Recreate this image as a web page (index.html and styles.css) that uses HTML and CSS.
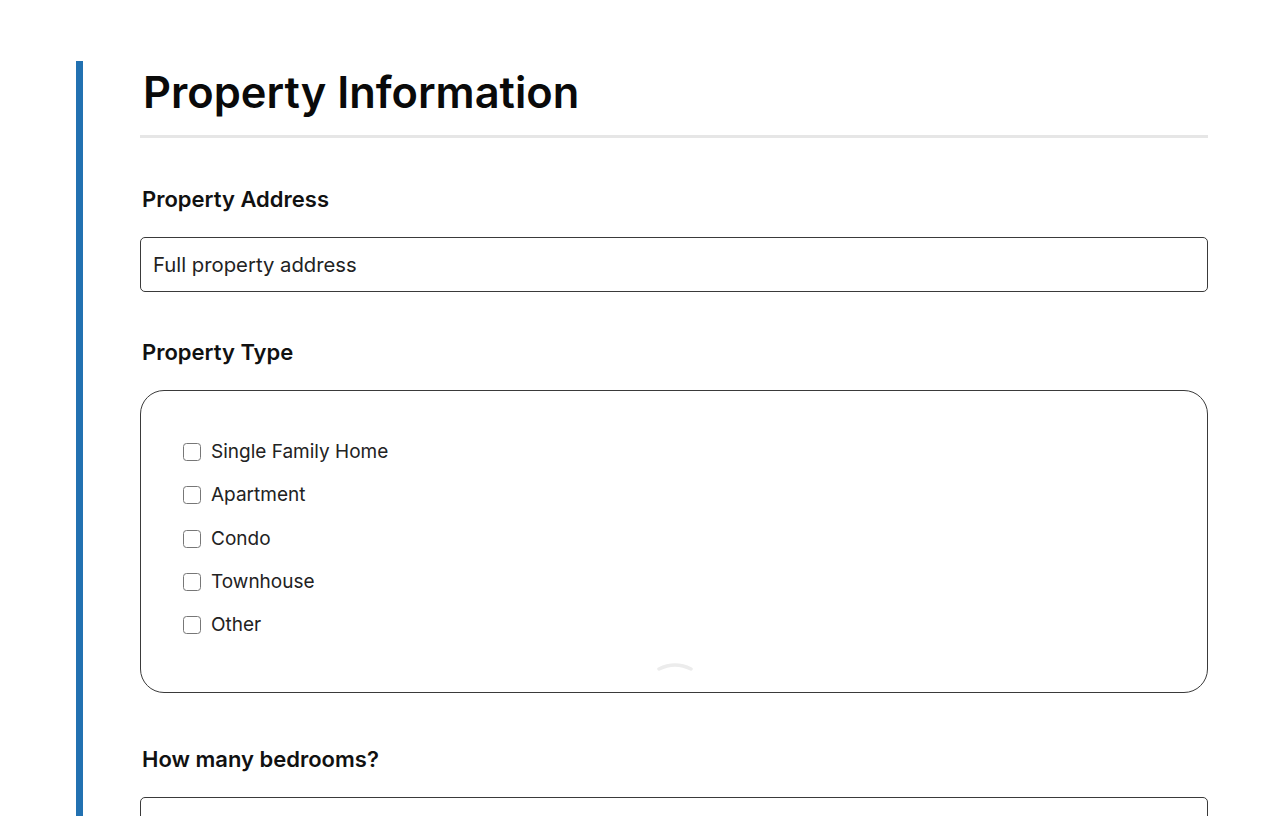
FILE: index.html
```html
<!DOCTYPE html>
<html>
<head>
<meta charset="utf-8">
<link rel="stylesheet" href="styles.css">
</head>
<body>
<section class="form-section">
  <h1 class="section-title">Property Information</h1>
  <div class="field">
    <label class="field-label">Property Address</label>
    <div class="text-input">Full property address</div>
  </div>
  <div class="field">
    <label class="field-label">Property Type</label>
    <div class="choice-box">
      <ul class="choices">
        <li class="choice"><span class="box"></span>Single Family Home</li>
        <li class="choice"><span class="box"></span>Apartment</li>
        <li class="choice"><span class="box"></span>Condo</li>
        <li class="choice"><span class="box"></span>Townhouse</li>
        <li class="choice"><span class="box"></span>Other</li>
      </ul>
      <svg class="arc" width="36" height="10" viewBox="0 0 36 10"><path d="M2 8 Q18 0 34 8" fill="none" stroke="#ececec" stroke-width="3.5" stroke-linecap="round"/></svg>
    </div>
  </div>
  <div class="field field-last">
    <label class="field-label">How many bedrooms?</label>
    <div class="text-input"></div>
  </div>
</section>
</body>
</html>
```
FILE: styles.css
```css
html, body {
  margin: 0;
  padding: 0;
  background: #ffffff;
}
body {
  font-family: Inter, "Noto Sans", sans-serif;
  color: #111;
  overflow: hidden;
  height: 816px;
}
.form-section {
  margin: 61px 0 0 76px;
  width: 1068px;
  border-left: 7px solid #2271b1;
  padding-left: 57px;
  padding-top: 4px;
}
.section-title {
  margin: 0;
  font-size: 43.4px;
  font-weight: 600;
  line-height: 54px;
  color: #0a0a0a;
  padding-left: 3px;
  padding-bottom: 16px;
  border-bottom: 3px solid #e6e6e6;
}
.field {
  display: flex;
  flex-direction: column;
  margin-top: 47px;
}
.field + .field {
  margin-top: 46px;
}
.field-last {
  margin-top: 52px !important;
}
.field-label {
  font-size: 22px;
  font-weight: 600;
  line-height: 28px;
  padding-left: 2px;
  color: #111;
}
.text-input {
  margin-top: 24px;
  height: 53px;
  border: 1px solid #3a3a3a;
  border-radius: 5px;
  padding: 0 12px;
  display: flex;
  align-items: center;
  font-size: 20.3px;
  color: #222;
}
.choice-box {
  position: relative;
  margin-top: 24px;
  height: 303px;
  border: 1px solid #3a3a3a;
  border-radius: 24px;
  box-sizing: border-box;
  padding: 47px 0 0 42px;
}
.choices {
  list-style: none;
  margin: 0;
  padding: 0;
  display: flex;
  flex-direction: column;
  gap: 15.3px;
}
.choice {
  display: flex;
  align-items: center;
  font-size: 19px;
  line-height: 28px;
  color: #222;
}
.box {
  width: 18px;
  height: 18px;
  border: 1.5px solid #777;
  border-radius: 3.5px;
  margin-right: 10px;
  box-sizing: border-box;
  flex: none;
}
.arc {
  position: absolute;
  left: 516px;
  top: 270px;
}
```
